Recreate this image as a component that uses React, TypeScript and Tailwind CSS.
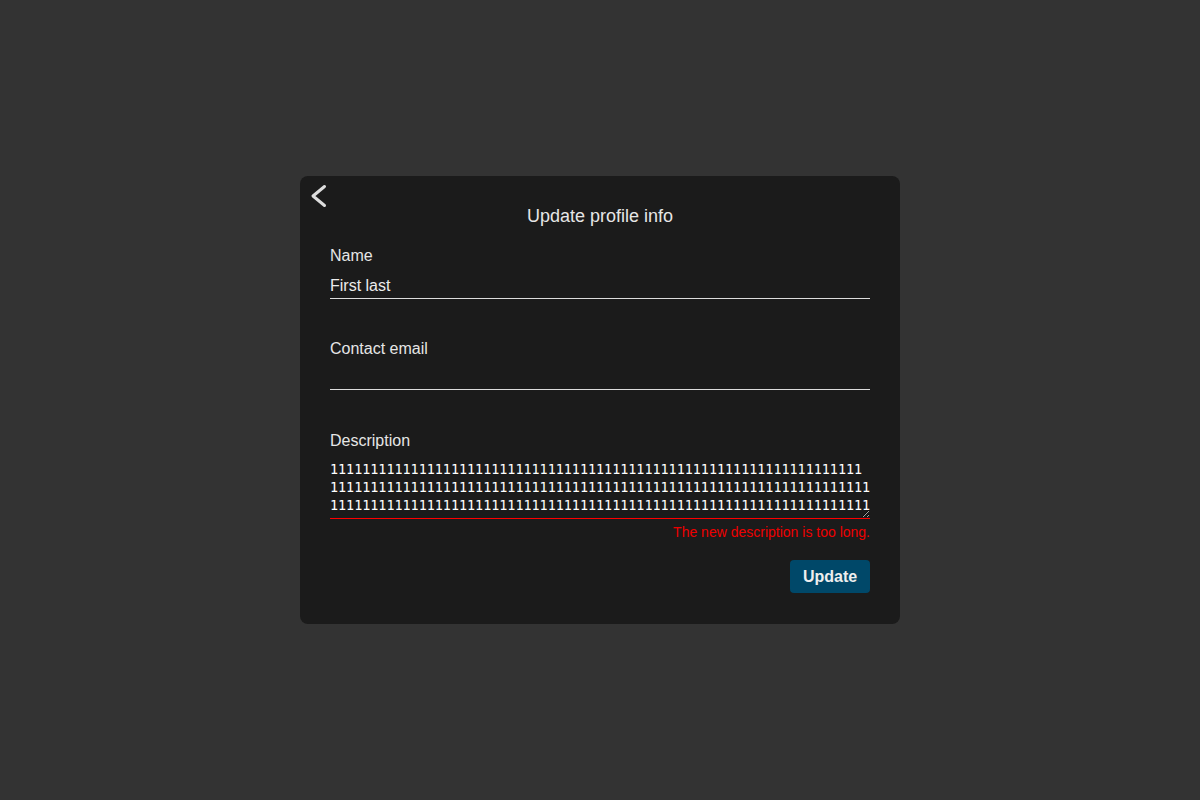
import { useState } from 'react'

const ones = (n: number) => '1'.repeat(n)

export default function App() {
    const [name, setName] = useState('First last')
    const [email, setEmail] = useState('')
    const [description, setDescription] = useState(
        ones(66) + '\n' + ones(67) + '\n' + ones(67)
    )

    return (
        <div className="min-h-screen w-full bg-[#333333] flex items-center justify-center font-['Liberation_Sans',Arial,sans-serif] text-[#e6e6e6]">
            <div className="relative w-[600px] rounded-lg bg-[#1b1b1b] px-[30px] pt-[29px] pb-[31px]">
                <button className="absolute left-0 top-0 text-[#dddddd]">
                    <svg
                        width="40"
                        height="40"
                        viewBox="0 0 40 40"
                        fill="none"
                        stroke="currentColor"
                        strokeWidth="3"
                        strokeLinecap="round"
                        strokeLinejoin="round"
                    >
                        <path d="M24.5 10.5 L13 20 L24.5 29.5" />
                    </svg>
                </button>

                <h2 className="text-center text-[18px] leading-[22px]">
                    Update profile info
                </h2>

                <form className="mt-[20px] flex flex-col">
                    <label className="text-[16px] leading-[18px]">Name</label>
                    <input
                        value={name}
                        onChange={(e) => setName(e.target.value)}
                        className="mt-[11px] h-[23px] w-full border-b border-[#dddddd] bg-transparent pb-[2px] text-[16px] leading-[20px] text-[#ececec] outline-none"
                    />

                    <label className="mt-[41px] text-[16px] leading-[18px]">
                        Contact email
                    </label>
                    <input
                        value={email}
                        onChange={(e) => setEmail(e.target.value)}
                        className="mt-[10px] h-[22px] w-full border-b border-[#dddddd] bg-transparent text-[16px] text-[#ececec] outline-none"
                    />

                    <label className="mt-[42px] text-[16px] leading-[18px]">
                        Description
                    </label>
                    <textarea
                        value={description}
                        onChange={(e) => setDescription(e.target.value)}
                        wrap="off"
                        className="mt-[7px] h-[62px] w-full overflow-hidden border-b border-[#ff0000] bg-transparent pt-[4px] font-['DejaVu_Sans_Mono',monospace] text-[13.4px] leading-[18px] text-white outline-none"
                    />
                    <p className="mt-[5px] text-right text-[14px] leading-[16px] text-[#ee0000]">
                        The new description is too long.
                    </p>

                    <div className="mt-[20px] flex justify-end">
                        <button
                            type="button"
                            className="h-[33px] w-[80px] rounded-[4px] bg-[#004869] text-[16px] font-bold text-[#eeeeee]"
                        >
                            Update
                        </button>
                    </div>
                </form>
            </div>
        </div>
    )
}
